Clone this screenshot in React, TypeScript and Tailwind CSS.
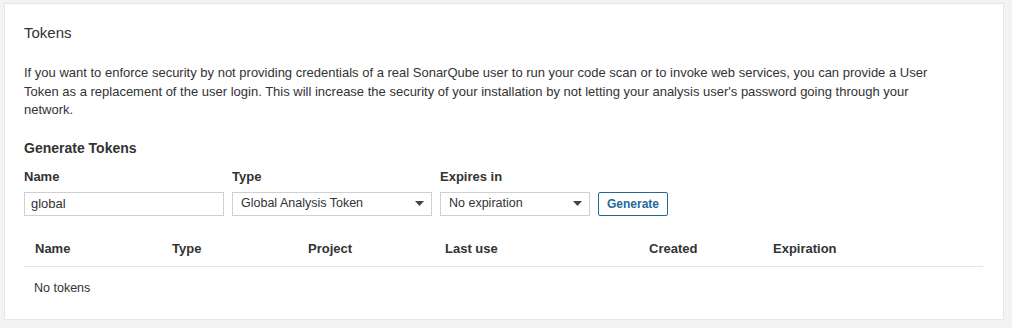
export default function App() {
  return (
    <div className="min-h-[328px] w-[1012px] bg-[#f3f3f3] pt-[3px] pl-[4px] font-['Liberation_Sans',Arial,sans-serif] text-[13px] text-[#333]">
      <div className="w-[1000px] h-[317px] bg-white border border-[#e6e6e6] px-[19px] pt-[19px]">
        <h2 className="text-[15px] leading-[20px] font-normal">Tokens</h2>
        <p className="mt-[21px] max-w-[930px] leading-[18.5px]">
          If you want to enforce security by not providing credentials of a real SonarQube user to run your code scan or to invoke web services, you can provide a User Token as a replacement of the user login. This will increase the security of your installation by not letting your analysis user's password going through your network.
        </p>
        <h3 className="mt-[19px] text-[14px] font-bold leading-[18px]">Generate Tokens</h3>
        <div className="mt-[12px] flex items-end gap-[8px]">
          <div className="flex flex-col gap-[7px]">
            <label className="font-bold leading-[16px]">Name</label>
            <input
              readOnly
              value="global"
              className="h-[24px] w-[200px] border border-[#d0d0d0] px-[6px] text-[13px] text-[#333] outline-none"
            />
          </div>
          <div className="flex flex-col gap-[7px]">
            <label className="font-bold leading-[16px]">Type</label>
            <Select value="Global Analysis Token" width="w-[200px]" />
          </div>
          <div className="flex flex-col gap-[7px]">
            <label className="font-bold leading-[16px]">Expires in</label>
            <Select value="No expiration" width="w-[150px]" />
          </div>
          <button className="h-[24px] rounded-[2px] border border-[#236a97] px-[8px] text-[12px] font-bold text-[#236a97] bg-white">
            Generate
          </button>
        </div>
        <table className="mt-[15px] w-[959px] border-collapse text-left">
          <thead>
            <tr className="border-b border-[#e6e6e6]">
              <th className="w-[138px] px-[11px] py-[8px] font-bold">Name</th>
              <th className="w-[136px] px-[10px] py-[8px] font-bold">Type</th>
              <th className="w-[137px] px-[10px] py-[8px] font-bold">Project</th>
              <th className="w-[204px] px-[10px] py-[8px] font-bold">Last use</th>
              <th className="w-[124px] px-[10px] py-[8px] font-bold">Created</th>
              <th className="px-[10px] py-[8px] font-bold">Expiration</th>
            </tr>
          </thead>
          <tbody>
            <tr>
              <td colSpan={6} className="px-[10px] pt-[12px] text-[12.5px]">No tokens</td>
            </tr>
          </tbody>
        </table>
      </div>
    </div>
  );
}

function Select({ value, width }: { value: string; width: string }) {
  return (
    <div className={`${width} h-[24px] flex items-center justify-between border border-[#d0d0d0] pl-[8px] pr-[7px] text-[12.5px]`}>
      <span>{value}</span>
      <svg width="9" height="5" viewBox="0 0 9 5">
        <path d="M0 0h9L4.5 5z" fill="#444" />
      </svg>
    </div>
  );
}
